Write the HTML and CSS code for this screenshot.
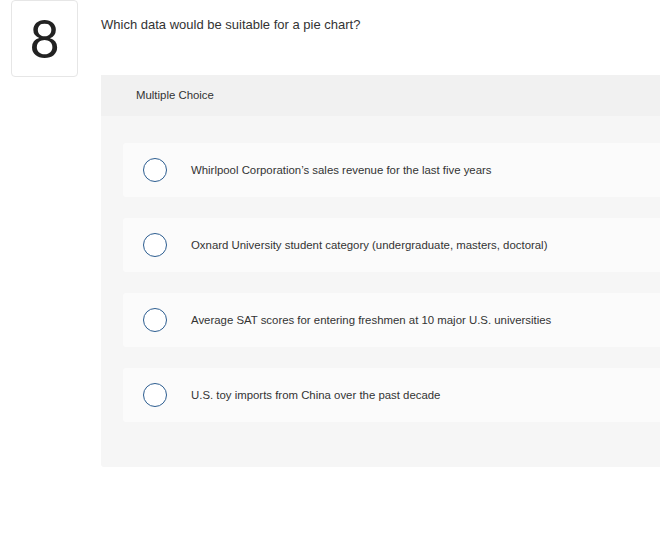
FILE: index.html
```html
<!DOCTYPE html>
<html>
<head>
<meta charset="utf-8">
<link rel="stylesheet" href="styles.css">
</head>
<body>
<div class="question">
  <div class="num">8</div>
  <div class="main">
    <p class="prompt">Which data would be suitable for a pie chart?</p>
    <div class="panel">
      <div class="panel-head">Multiple Choice</div>
      <div class="panel-body">
        <div class="option"><span class="radio"></span><span class="label">Whirlpool Corporation’s sales revenue for the last five years</span></div>
        <div class="option"><span class="radio"></span><span class="label">Oxnard University student category (undergraduate, masters, doctoral)</span></div>
        <div class="option"><span class="radio"></span><span class="label">Average SAT scores for entering freshmen at 10 major U.S. universities</span></div>
        <div class="option"><span class="radio"></span><span class="label">U.S. toy imports from China over the past decade</span></div>
      </div>
    </div>
  </div>
</div>
</body>
</html>
```
FILE: styles.css
```css
html, body {
  margin: 0;
  padding: 0;
  background: #fff;
}
body {
  font-family: "Liberation Sans", Arial, sans-serif;
  color: #333;
  overflow: hidden;
}
.question {
  display: flex;
  padding-left: 11px;
}
.num {
  flex: none;
  width: 67px;
  height: 77px;
  box-sizing: border-box;
  border: 1px solid #e6e6e6;
  border-radius: 4px;
  display: flex;
  align-items: center;
  justify-content: center;
  font-family: "Lato", sans-serif;
  font-size: 52px;
  font-weight: 400;
  color: #222;
  line-height: 1;
  padding-bottom: 2px;
}
.main {
  flex: 1;
  margin-left: 23px;
  min-width: 0;
}
.prompt {
  margin: 0;
  padding-top: 17px;
  font-size: 13px;
  line-height: 16px;
  color: #333;
  height: 75px;
  box-sizing: border-box;
}
.panel {
  background: #f6f6f6;
  border-radius: 0 0 3px 3px;
  width: 580px;
  padding-bottom: 45px;
}
.panel-head {
  background: #f1f1f1;
  height: 41px;
  box-sizing: border-box;
  padding-left: 35px;
  font-size: 11.4px;
  line-height: 41px;
  color: #333;
}
.panel-body {
  padding: 27px 0 0 22px;
  display: flex;
  flex-direction: column;
  gap: 21px;
}
.option {
  background: #fbfbfb;
  border-radius: 3px;
  height: 54px;
  display: flex;
  align-items: center;
  padding-left: 20px;
}
.radio {
  flex: none;
  width: 24px;
  height: 24px;
  box-sizing: border-box;
  border: 1.5px solid #2c5d90;
  border-radius: 50%;
  background: #fff;
  margin-right: 24px;
}
.label {
  font-size: 11.4px;
  color: #333;
  white-space: nowrap;
}
```
